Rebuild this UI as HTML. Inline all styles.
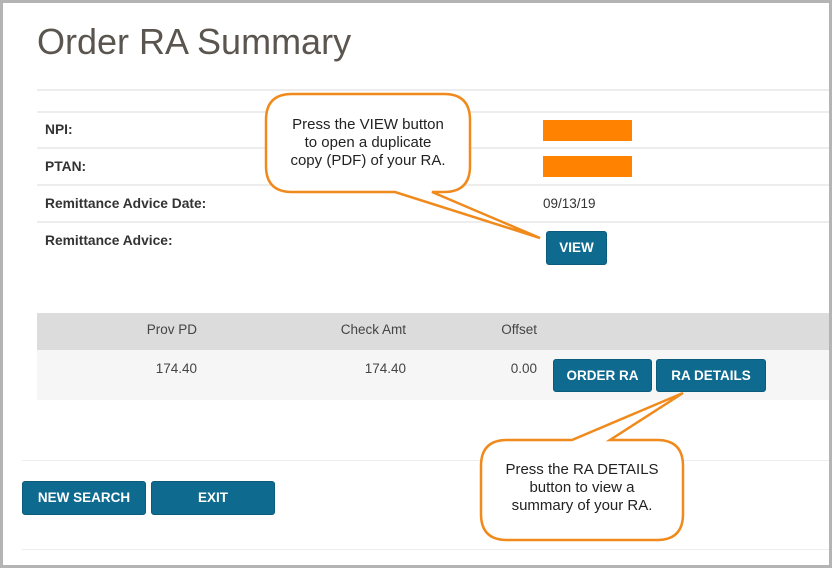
<!DOCTYPE html>
<html><head><style>
*{margin:0;padding:0;box-sizing:border-box}
body{width:832px;height:568px;position:relative;overflow:hidden;background:#fff;font-family:"Liberation Sans",Arial,sans-serif}
.frame{position:absolute;left:0;top:0;width:832px;height:568px;border:3px solid #b4b4b4;border-right-width:3px}
.abs{position:absolute}
.line{position:absolute;left:37px;right:3px;height:2px;background:#ededed}
.lbl{position:absolute;left:45px;font-size:13.8px;font-weight:bold;color:#333}
.btn{position:absolute;background:#0e6a8f;color:#fff;font-weight:bold;font-size:13.5px;text-align:center;border-radius:3px;border:1px solid #0a5b7c}
.num{position:absolute;font-size:13.5px;color:#444;text-align:right}
</style></head><body>
<div class="abs" style="left:37px;top:21px;font-size:36px;color:#5b5550">Order RA Summary</div>
<div class="line" style="top:89px"></div>
<div class="line" style="top:111px"></div>
<div class="line" style="top:147px"></div>
<div class="line" style="top:184px"></div>
<div class="line" style="top:221px"></div>
<div class="lbl" style="top:122px">NPI:</div>
<div class="lbl" style="top:159px">PTAN:</div>
<div class="lbl" style="top:196px">Remittance Advice Date:</div>
<div class="lbl" style="top:233px">Remittance Advice:</div>
<div class="abs" style="left:543px;top:120px;width:89px;height:21px;background:#ff8200"></div>
<div class="abs" style="left:543px;top:156px;width:89px;height:21px;background:#ff8200"></div>
<div class="abs" style="left:543px;top:196px;font-size:13.5px;color:#333">09/13/19</div>
<div class="btn" style="left:546px;top:231px;width:61px;height:34px;line-height:32px">VIEW</div>
<div class="abs" style="left:37px;top:313px;right:3px;height:37px;background:#dcdcdc"></div>
<div class="abs" style="left:37px;top:350px;right:3px;height:50px;background:#f6f6f6"></div>
<div class="num" style="left:100px;width:97px;top:322px">Prov PD</div>
<div class="num" style="left:300px;width:106px;top:322px">Check Amt</div>
<div class="num" style="left:480px;width:57px;top:322px">Offset</div>
<div class="num" style="left:100px;width:97px;top:361px">174.40</div>
<div class="num" style="left:300px;width:106px;top:361px">174.40</div>
<div class="num" style="left:480px;width:57px;top:361px">0.00</div>
<div class="btn" style="left:553px;top:359px;width:99px;height:33px;line-height:31px">ORDER RA</div>
<div class="btn" style="left:656px;top:359px;width:110px;height:33px;line-height:31px">RA DETAILS</div>
<div class="line" style="top:460px;left:22px;height:1px"></div>
<div class="line" style="top:549px;left:22px;height:1px"></div>
<div class="btn" style="left:22px;top:481px;width:124px;height:34px;line-height:32px">NEW SEARCH</div>
<div class="btn" style="left:151px;top:481px;width:124px;height:34px;line-height:32px">EXIT</div>
<svg class="abs" style="left:0;top:0" width="832" height="568">
<path d="M292 94 H444 Q470 94 470 120 V166 Q470 192 444 192 H432 L540 238 L395 192 H292 Q266 192 266 166 V120 Q266 94 292 94 Z" fill="#fff" stroke="#f08a1c" stroke-width="2.5"/>
<path d="M507 440 H572 L683 393 L610 440 H657 Q683 440 683 466 V514 Q683 540 657 540 H507 Q481 540 481 514 V466 Q481 440 507 440 Z" fill="#fff" stroke="#f08a1c" stroke-width="2.5"/>
</svg>
<div class="abs" style="left:266px;top:116px;width:204px;text-align:center;font-size:15px;line-height:18px;color:#222">Press the VIEW button<br>to open a duplicate<br>copy (PDF) of your RA.</div>
<div class="abs" style="left:481px;top:461px;width:202px;text-align:center;font-size:15px;line-height:18px;color:#222">Press the RA DETAILS<br>button to view a<br>summary of your RA.</div>
<div class="frame"></div>
</body></html>
